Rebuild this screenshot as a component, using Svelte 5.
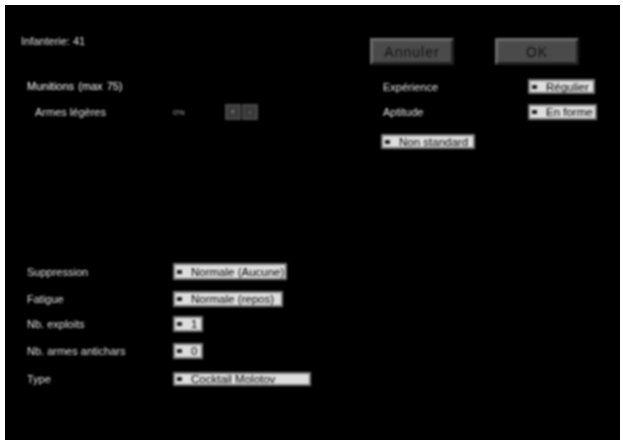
<script>
  const rows = [
    { label: 'Suppression', value: 'Normale (Aucune)', width: 114, height: 17, gap: 11 },
    { label: 'Fatigue', value: 'Normale (repos)', width: 110, height: 16, gap: 9 },
    { label: 'Nb. exploits', value: '1', width: 30, height: 16, gap: 11 },
    { label: 'Nb. armes antichars', value: '0', width: 30, height: 16, gap: 13 },
    { label: 'Type', value: 'Cocktail Molotov', width: 138, height: 14, gap: 0 }
  ];
</script>

<div class="panel">
  <div class="columns">
    <section class="left">
      <div class="title">Infanterie: 41</div>
      <div class="ammo-head">Munitions (max 75)</div>
      <div class="ammo-row">
        <span class="ammo-name">Armes légères</span>
        <span class="ammo-val">0%</span>
        <span class="steppers"><span class="step">+</span><span class="step">-</span></span>
      </div>
      <div class="rows">
        {#each rows as r}
          <div class="row" style="margin-bottom:{r.gap}px">
            <span class="row-label">{r.label}</span>
            <span class="select" style="width:{r.width}px;height:{r.height}px"><i class="mark"></i>{r.value}</span>
          </div>
        {/each}
      </div>
    </section>
    <section class="right">
      <div class="buttons">
        <span class="btn annuler">Annuler</span>
        <span class="btn ok">OK</span>
      </div>
      <div class="attr first">
        <span>Expérience</span>
        <span class="select small"><i class="mark"></i>Régulier</span>
      </div>
      <div class="attr second">
        <span>Aptitude</span>
        <span class="select small wide"><i class="mark"></i>En forme</span>
      </div>
      <span class="select standard"><i class="mark"></i>Non standard</span>
    </section>
  </div>
</div>

<style>
  :global(body) { margin: 0; background: #fff; }
  .panel {
    box-sizing: border-box;
    margin: 5px 3px 0 5px;
    height: 435px;
    background: #000;
    color: #e4e4e4;
    font: 11px "Liberation Sans", Arial, sans-serif;
    overflow: hidden;
  }
  .columns { display: flex; filter: blur(0.8px); }
  .left { width: 376px; padding: 31px 0 0 16px; box-sizing: border-box; }
  .title { height: 20px; line-height: 10px; }
  .ammo-head { margin: 24px 0 0 6px; height: 14px; line-height: 12px; word-spacing: 1px; color: #fff; }
  .ammo-row { display: flex; align-items: center; height: 16px; margin: 10px 0 0 14px; }
  .ammo-name { width: 138px; }
  .ammo-val { width: 52px; font-size: 8px; color: #aaa; }
  .steppers { display: flex; gap: 1px; }
  .step {
    width: 16px; height: 16px; display: flex; align-items: center; justify-content: center;
    background: #3a3a3a; border: 2px solid #484848; box-sizing: border-box; color: #999; font-size: 9px;
  }
  .rows { margin: 143px 0 0 6px; }
  .row { display: flex; align-items: center; }
  .row-label { width: 146px; }
  .select {
    display: flex; align-items: center; box-sizing: border-box;
    padding-left: 2px; background: #ddd; border: 2px solid #777; color: #000;
    font-size: 11.5px; white-space: nowrap;
  }
  .mark { width: 5px; height: 4px; margin-right: 9px; background: #222; flex: none; }
  .right { flex: 1; padding-top: 33px; }
  .buttons { display: flex; gap: 41px; margin-left: -11px; }
  .btn {
    width: 84px; height: 27px; box-sizing: border-box;
    display: flex; align-items: center; justify-content: center;
    background: #4a4a4a;
    border: 3px solid;
    border-color: #6a6a6a #222 #222 #6a6a6a;
    color: #111; font-size: 14px; letter-spacing: 1px;
  }
  .attr { display: flex; align-items: center; justify-content: space-between; width: 212px; margin-left: 2px; }
  .attr.first { margin-top: 14px; height: 15px; }
  .attr.second { margin-top: 10px; height: 16px; }
  .select.small { width: 67px; height: 15px; }
  .select.wide { width: 69px; height: 16px; margin-right: -2px; }
  .standard { width: 94px; height: 15px; margin-top: 14px; }
</style>
